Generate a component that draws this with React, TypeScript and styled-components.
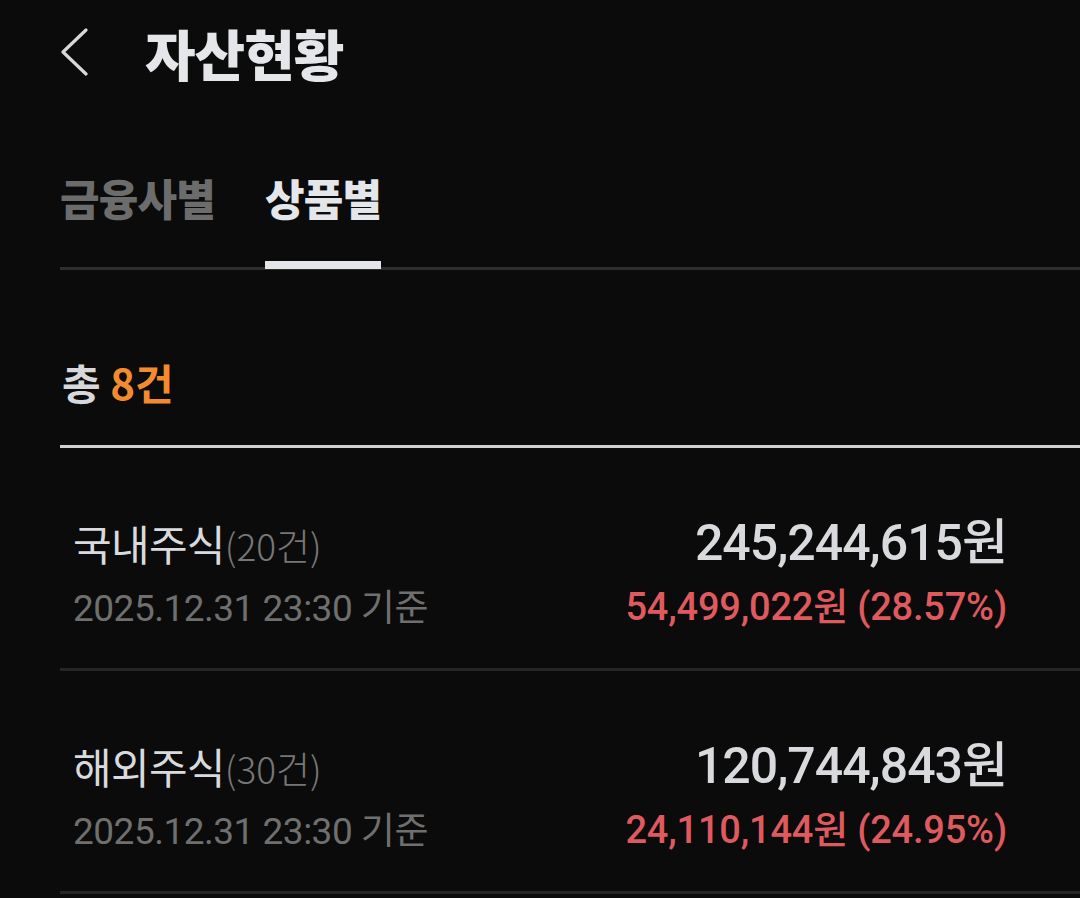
import React from "react";
import styled, { createGlobalStyle } from "styled-components";

const Global = createGlobalStyle`
  html, body { margin: 0; padding: 0; background: #0b0b0b; }
  body { font-family: Roboto, "Noto Sans CJK KR", sans-serif; -webkit-font-smoothing: antialiased; }
`;

const Page = styled.div`
  min-height: 898px;
  background: #0b0b0b;
  padding-left: 60px;
  box-sizing: border-box;
  overflow: hidden;
`;

const Header = styled.header`
  display: flex;
  align-items: center;
  height: 70px;
  margin-top: 17px;
  gap: 57px;
`;

const BackButton = styled.button`
  width: 28px;
  height: 50px;
  padding: 0;
  border: 0;
  background: none;
  display: flex;
  align-items: center;
  justify-content: flex-start;
  cursor: pointer;
`;

const Title = styled.h1`
  margin: 0;
  font-family: "Noto Sans CJK KR", sans-serif;
  font-size: 55px;
  font-weight: 900;
  line-height: 70px;
  color: #e4e6e9;
  letter-spacing: -1px;
`;

const TabBar = styled.nav`
  display: flex;
  gap: 50px;
  margin-top: 85px;
  border-bottom: 3px solid #2e2e2e;
`;

const Tab = styled.div<{ $active?: boolean }>`
  font-family: "Noto Sans CJK KR", sans-serif;
  font-size: 43px;
  font-weight: 900;
  line-height: 50px;
  color: ${(p) => (p.$active ? "#e4e6e9" : "#6c6c6c")};
  padding: 0 0 39px 0;
  margin-bottom: -2px;
  border-bottom: 8px solid ${(p) => (p.$active ? "#e4e6e9" : "transparent")};
  letter-spacing: -0.8px;
`;

const Summary = styled.div`
  padding: 88px 0 39px 2px;
  font-family: "Noto Sans CJK KR", sans-serif;
  font-size: 42px;
  font-weight: 700;
  line-height: 48px;
  color: #d6d8db;
  border-bottom: 3px solid #d0d0d0;
`;

const Accent = styled.span`
  color: #f28b2d;
`;

const Row = styled.div`
  display: flex;
  justify-content: space-between;
  padding: 71px 73px 38px 13px;
  border-bottom: 3px solid #262626;
`;

const Col = styled.div<{ $right?: boolean }>`
  display: flex;
  flex-direction: column;
  align-items: ${(p) => (p.$right ? "flex-end" : "flex-start")};
  gap: 19px;
`;

const Name = styled.div`
  font-family: "Noto Sans CJK KR", sans-serif;
  font-size: 42px;
  line-height: 48px;
  color: #d8dadd;
  letter-spacing: -0.7px;
`;

const Count = styled.span`
  font-size: 37px;
  font-weight: 300;
  color: #777;
  letter-spacing: 0px;
`;

const Meta = styled.div`
  font-family: Roboto, "Noto Sans CJK KR", sans-serif;
  font-size: 37px;
  line-height: 42px;
  color: #6f6f6f;
  letter-spacing: -0.5px;
`;

const Amount = styled.div`
  font-family: Roboto, "Noto Sans CJK KR", sans-serif;
  font-size: 50px;
  font-weight: 500;
  line-height: 48px;
  color: #d8dadd;
  letter-spacing: -1px;
`;

const Profit = styled.div`
  font-family: Roboto, "Noto Sans CJK KR", sans-serif;
  font-size: 38px;
  font-weight: 500;
  line-height: 42px;
  color: #df5a5e;
  letter-spacing: -0.2px;
`;

const items = [
  { name: "국내주식", count: 20, amount: "245,244,615원", profit: "54,499,022원 (28.57%)" },
  { name: "해외주식", count: 30, amount: "120,744,843원", profit: "24,110,144원 (24.95%)" },
];

export default function App() {
  return (
    <Page>
      <Global />
      <Header>
        <BackButton aria-label="뒤로">
          <svg width="28" height="50" viewBox="0 0 28 50" fill="none">
            <path d="M26 3 L3 25 L26 47" stroke="#d8d8d8" strokeWidth="3.2" strokeLinecap="round" strokeLinejoin="round" />
          </svg>
        </BackButton>
        <Title>자산현황</Title>
      </Header>
      <TabBar>
        <Tab>금융사별</Tab>
        <Tab $active>상품별</Tab>
      </TabBar>
      <Summary>
        총 <Accent>8건</Accent>
      </Summary>
      {items.map((it) => (
        <Row key={it.name}>
          <Col>
            <Name>
              {it.name}
              <Count>({it.count}건)</Count>
            </Name>
            <Meta>2025.12.31 23:30 기준</Meta>
          </Col>
          <Col $right>
            <Amount>{it.amount}</Amount>
            <Profit>{it.profit}</Profit>
          </Col>
        </Row>
      ))}
    </Page>
  );
}
